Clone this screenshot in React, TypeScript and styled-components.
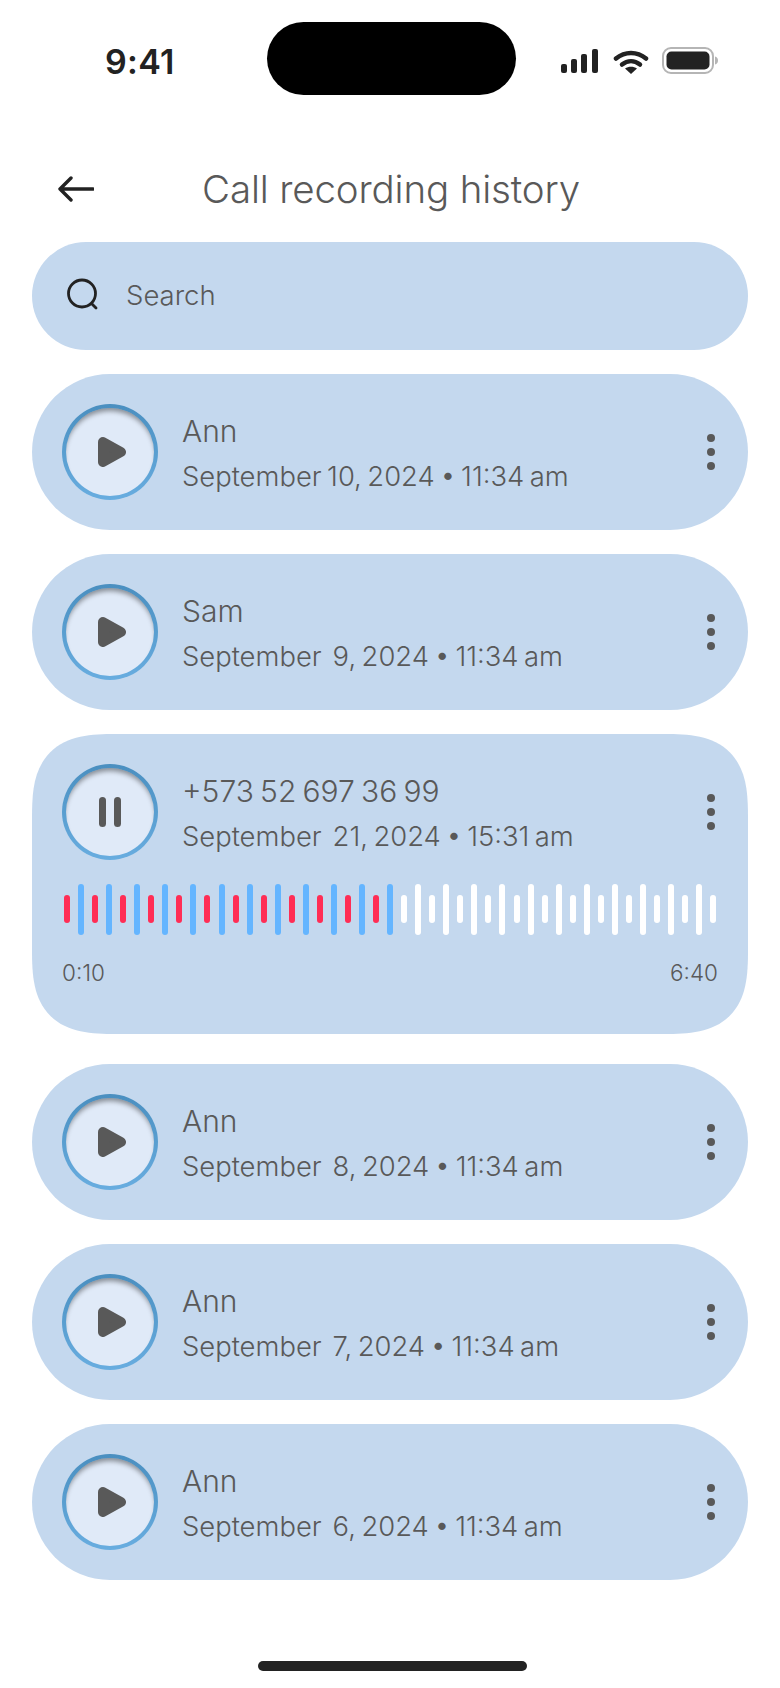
import styled, { createGlobalStyle } from 'styled-components';

const TEXT = '#595959';
const CARD = '#c4d8ee';

type Recording = {
  name: string;
  date: string;
  active?: boolean;
};

const recordings: Recording[] = [
  { name: 'Ann', date: 'September 10, 2024 • 11:34 am' },
  { name: 'Sam', date: 'September  9, 2024 • 11:34 am' },
  { name: '+573 52 697 36 99', date: 'September  21, 2024 • 15:31 am', active: true },
  { name: 'Ann', date: 'September  8, 2024 • 11:34 am' },
  { name: 'Ann', date: 'September  7, 2024 • 11:34 am' },
  { name: 'Ann', date: 'September  6, 2024 • 11:34 am' },
];

const BAR_COUNT = 47;
const PLAYED_BARS = 24;

const GlobalStyle = createGlobalStyle`
  html, body {
    margin: 0;
    padding: 0;
    background: #fff;
  }
  body {
    font-family: 'Inter', 'Liberation Sans', sans-serif;
    font-weight: 300;
    color: ${TEXT};
  }
`;

const Screen = styled.div`
  width: 780px;
  height: 1688px;
  overflow: hidden;
  display: flex;
  flex-direction: column;
  background: #fff;
`;

const StatusBar = styled.div`
  height: 118px;
  padding: 22px 62px 0 105px;
  box-sizing: border-box;
  display: flex;
  align-items: flex-start;
`;

const Clock = styled.div`
  width: 162px;
  margin-top: 20px;
  font-size: 34px;
  line-height: 40px;
  font-weight: 600;
  letter-spacing: 0.3px;
  color: #222;
`;

const Island = styled.div`
  width: 249px;
  height: 73px;
  border-radius: 37px;
  background: #000;
`;

const StatusIcons = styled.div`
  margin-left: 44px;
  margin-top: 27px;
  display: flex;
`;

const Header = styled.div`
  height: 124px;
  padding: 0 0 0 58px;
  display: flex;
  align-items: center;
  box-sizing: border-box;
`;

const BackButton = styled.div`
  display: flex;
  margin-top: 18px;
`;

const Title = styled.h1`
  margin: 18px 0 0 108px;
  font-size: 38.5px;
  line-height: 44px;
  font-weight: 300;
  letter-spacing: -0.15px;
  color: ${TEXT};
`;

const List = styled.div`
  padding: 0 32px;
  display: flex;
  flex-direction: column;
`;

const SearchBar = styled.div`
  height: 108px;
  border-radius: 54px;
  background: ${CARD};
  display: flex;
  align-items: center;
  padding-left: 34px;
  gap: 26px;
`;

const SearchLabel = styled.span`
  font-size: 27.5px;
  line-height: 32px;
  margin-top: -2px;
`;

const Card = styled.div<{ $active?: boolean }>`
  margin-top: 24px;
  margin-bottom: ${({ $active }) => ($active ? '6px' : '0')};
  height: ${({ $active }) => ($active ? '300px' : '156px')};
  border-radius: ${({ $active }) => ($active ? '84px' : '78px')};
  corner-shape: ${({ $active }) => ($active ? 'superellipse(1.5)' : 'round')};
  background: ${CARD};
  padding: 30px 33px 0 30px;
  box-sizing: border-box;
`;

const CardRow = styled.div`
  display: flex;
  align-items: center;
  height: 96px;
`;

const PlayButton = styled.div`
  width: 96px;
  height: 96px;
  flex: none;
  box-sizing: border-box;
  border: 4px solid transparent;
  border-radius: 50%;
  background:
    linear-gradient(#e0eaf8, #e0eaf8) padding-box,
    linear-gradient(#4a8fc0, #68ade0) border-box;
  box-shadow: inset 0 5px 5px -2px rgba(0, 0, 0, 0.4);
  display: flex;
  align-items: center;
  justify-content: center;
`;

const CardText = styled.div`
  margin-left: 24px;
  padding-top: 1px;
  flex: 1;
`;

const Name = styled.div`
  font-size: 30px;
  line-height: 36px;
  word-spacing: -2.2px;
`;

const DateLine = styled.div`
  font-size: 27.4px;
  line-height: 32px;
  margin-top: 11px;
  word-spacing: -2.2px;
  white-space: pre;
`;

const Wave = styled.div`
  height: 52px;
  margin-top: 23px;
  padding-left: 2px;
  display: flex;
  align-items: center;
  gap: 8.05px;
`;

const Bar = styled.span<{ $tall: boolean; $played: boolean }>`
  width: 6px;
  flex: none;
  height: ${({ $tall }) => ($tall ? '51px' : '28px')};
  border-radius: 3px;
  background: ${({ $tall, $played }) =>
    !$played ? '#fff' : $tall ? '#64b5ff' : '#ff2d55'};
`;

const Times = styled.div`
  margin: 25px -3px 0 0;
  display: flex;
  justify-content: space-between;
  font-size: 22.5px;
  line-height: 26px;
`;

const BackIcon = () => (
  <svg width="36" height="26" viewBox="0 0 36 26" fill="none">
    <path
      d="M35 13H2M13 2 2 13l11 11"
      stroke="#222"
      strokeWidth="3.400"
      strokeLinecap="round"
      strokeLinejoin="round"
    />
  </svg>
);

const SearchIcon = () => (
  <svg width="34" height="34" viewBox="0 0 34 34" fill="none" style={{ marginTop: -2 }}>
    <circle cx="16" cy="15.500" r="13.500" stroke="#222" strokeWidth="2.800" />
    <path d="m26 26 4 4" stroke="#222" strokeWidth="2.800" strokeLinecap="round" />
  </svg>
);

const PlayIcon = () => (
  <svg width="28" height="30" viewBox="0 0 28 30" style={{ marginLeft: 4 }}>
    <path
      d="M5 5 23 15 5 25Z"
      fill={TEXT}
      stroke={TEXT}
      strokeWidth="10"
      strokeLinejoin="round"
    />
  </svg>
);

const PauseIcon = () => (
  <svg width="22" height="30" viewBox="0 0 22 30">
    <rect x="0" y="0" width="7" height="30" rx="3.500" fill={TEXT} />
    <rect x="15" y="0" width="7" height="30" rx="3.500" fill={TEXT} />
  </svg>
);

const MoreIcon = () => (
  <svg width="8" height="36" viewBox="0 0 8 36">
    <circle cx="4" cy="4" r="4" fill={TEXT} />
    <circle cx="4" cy="18" r="4" fill={TEXT} />
    <circle cx="4" cy="32" r="4" fill={TEXT} />
  </svg>
);

const StatusGlyphs = () => (
  <>
    <svg width="40" height="24" viewBox="0 0 40 24" fill="#222">
      <rect x="1" y="15" width="6" height="9" rx="2" />
      <rect x="11" y="10" width="6" height="14" rx="2" />
      <rect x="21" y="5" width="6" height="19" rx="2" />
      <rect x="32" y="0" width="6" height="24" rx="2" />
    </svg>
    <svg width="36" height="26" viewBox="0 0 36 26" fill="none" style={{ marginLeft: 13 }}>
      <path d="M3 9.500C12 2 24 2 33 9.500" stroke="#222" strokeWidth="4.500" strokeLinecap="round" />
      <path d="M9 15.500c5.500-4.500 12.500-4.500 18 0" stroke="#222" strokeWidth="4.500" strokeLinecap="round" />
      <path d="m18 25-6-5.500c3.500-2.500 8.500-2.500 12 0Z" fill="#222" />
    </svg>
    <svg width="56" height="27" viewBox="0 0 56 27" fill="none" style={{ marginLeft: 13, marginTop: -2 }}>
      <rect x="1" y="1" width="50" height="25" rx="8" stroke="#b5b5b5" strokeWidth="2" />
      <rect x="4.500" y="4.500" width="43" height="18" rx="5" fill="#222" />
      <path d="M53 9.500c2 .5 3 2 3 4s-1 3.500-3 4Z" fill="#b5b5b5" />
    </svg>
  </>
);

const Waveform = () => (
  <Wave>
    {Array.from({ length: BAR_COUNT }, (_, i) => (
      <Bar key={i} $tall={i % 2 === 1} $played={i < PLAYED_BARS} />
    ))}
  </Wave>
);

const HomeIndicator = styled.div`
  width: 269px;
  height: 10px;
  border-radius: 5px;
  background: #222;
  margin: 81px 0 0 258px;
`;

export default function App() {
  return (
    <Screen>
      <GlobalStyle />
      <StatusBar>
        <Clock>9:41</Clock>
        <Island />
        <StatusIcons>
          <StatusGlyphs />
        </StatusIcons>
      </StatusBar>
      <Header>
        <BackButton>
          <BackIcon />
        </BackButton>
        <Title>Call recording history</Title>
      </Header>
      <List>
        <SearchBar>
          <SearchIcon />
          <SearchLabel>Search</SearchLabel>
        </SearchBar>
        {recordings.map(({ name, date, active }, index) => (
          <Card key={index} $active={active}>
            <CardRow>
              <PlayButton>{active ? <PauseIcon /> : <PlayIcon />}</PlayButton>
              <CardText>
                <Name>{name}</Name>
                <DateLine>{date}</DateLine>
              </CardText>
              <MoreIcon />
            </CardRow>
            {active && (
              <>
                <Waveform />
                <Times>
                  <span>0:10</span>
                  <span>6:40</span>
                </Times>
              </>
            )}
          </Card>
        ))}
      </List>
      <HomeIndicator />
    </Screen>
  );
}
